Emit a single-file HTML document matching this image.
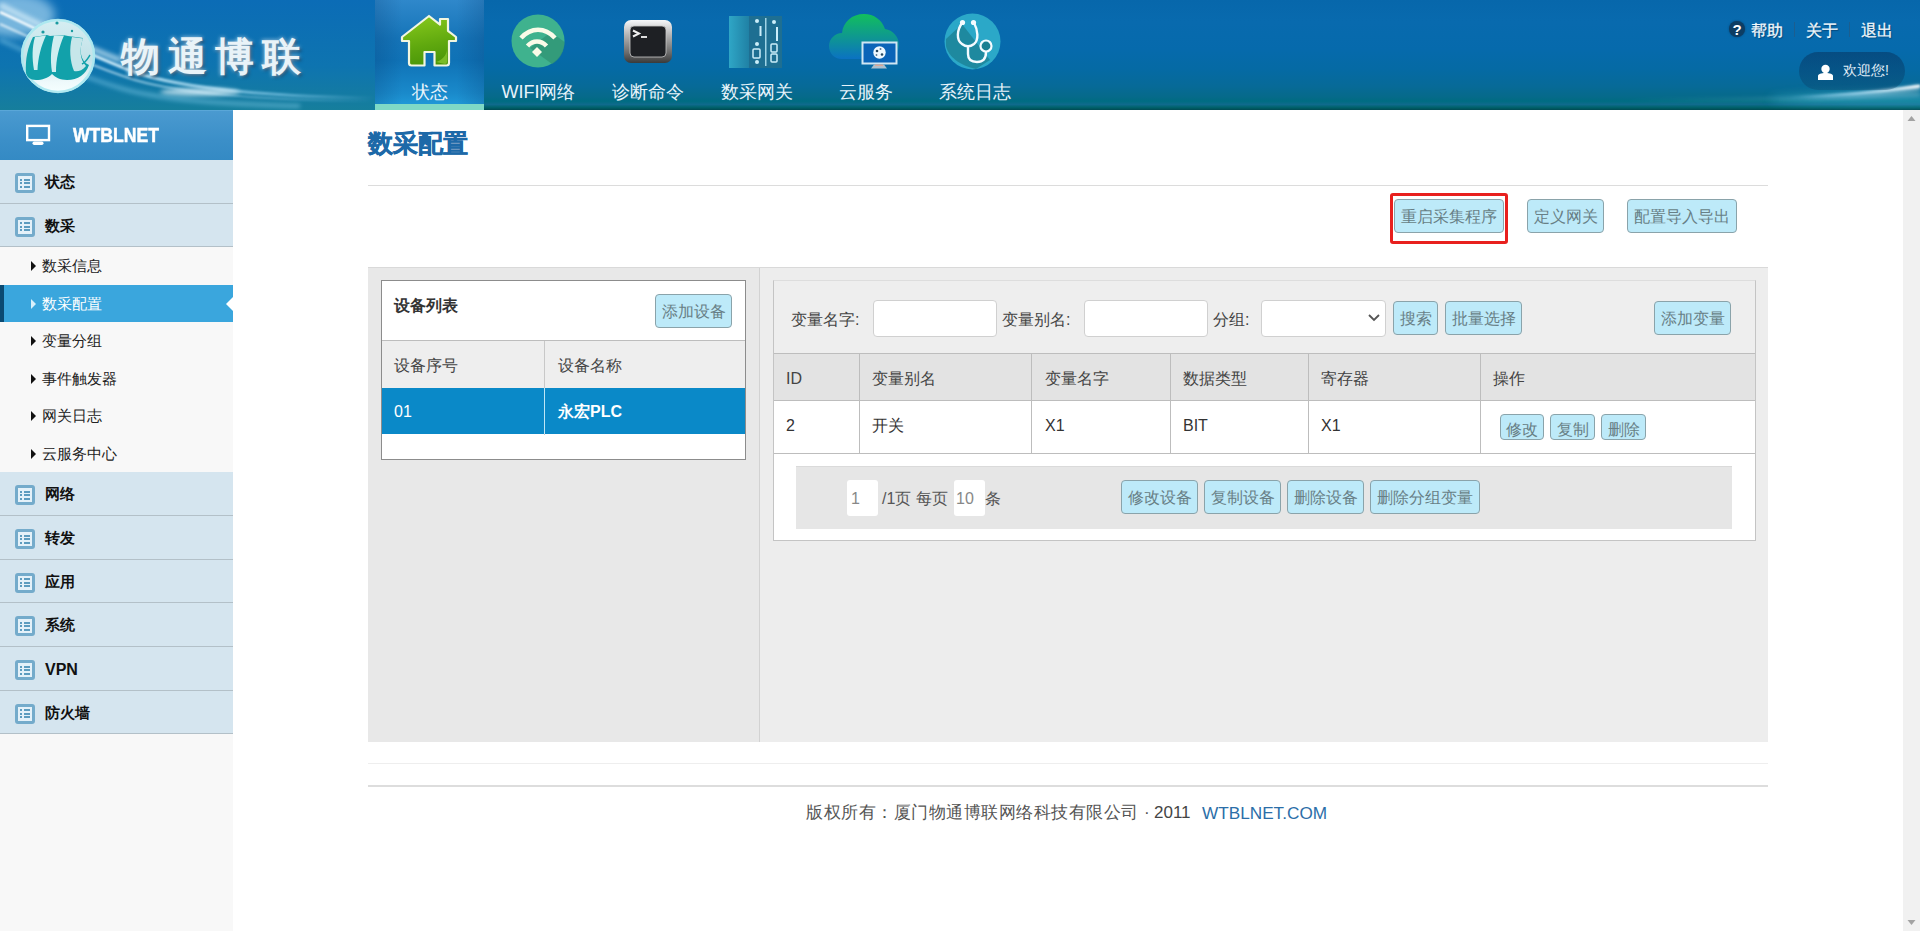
<!DOCTYPE html>
<html><head><meta charset="utf-8">
<style>
*{box-sizing:border-box;margin:0;padding:0}
html,body{width:1920px;height:931px;overflow:hidden;background:#fff;font-family:"Liberation Sans",sans-serif;color:#333}
.a{position:absolute}
#hdr{left:0;top:0;width:1920px;height:110px;background:linear-gradient(180deg,#0767ab 0%,#086aae 20%,#066aac 45%,#056aa4 63%,#076a98 78%,#066a8a 88%,#006c82 92%,#0f6a8c 95%,#00626c 97.5%,#004a52 100%);overflow:hidden}
.nav{top:0;width:109px;height:110px;text-align:center;color:#e8f4fb;font-size:18px}
.nav .lb{position:absolute;left:0;right:0;top:80px;line-height:24px}
#sb{left:0;top:110px;width:233px;height:821px;background:#f8f8f8}
.mi{left:0;width:233px;background:#d5e5ef;border-bottom:1px solid #b3c0c8;font-size:14.5px;font-weight:bold;color:#111}
.mi .t{position:absolute;left:45px;top:0}
.ico{position:absolute;left:15px;width:20px;height:20px;border:3px solid #74abcb;border-radius:3px;background:#e4f1f9}
.ico i{position:absolute;left:2px;width:2px;height:2px;background:#5d9cbf;box-shadow:4px 0 0 #5d9cbf,6px 0 0 #5d9cbf,8px 0 0 #5d9cbf}
.si{left:0;width:233px;height:37.5px;font-size:15px;color:#222;line-height:37.5px}
.si .t{position:absolute;left:42px}
.si .tri{position:absolute;left:31px;top:14px;width:0;height:0;border-left:5px solid #111;border-top:5px solid transparent;border-bottom:5px solid transparent}
.btn{position:absolute;height:34px;background:#bdeaf9;border:1px solid #8aa3aa;border-radius:4px;color:#687f86;font-size:16px;text-align:center;line-height:34px;white-space:nowrap}
.th{background:#eeeeee}
</style></head><body>
<div id="hdr" class="a">
 <!-- streaks left -->
 <svg class="a" style="left:0;top:0" width="1920" height="110">
  <defs>
   <filter id="bl2" filterUnits="userSpaceOnUse" x="-100" y="-100" width="2200" height="320"><feGaussianBlur stdDeviation="2"/></filter>
   <filter id="bl1" filterUnits="userSpaceOnUse" x="-100" y="-100" width="2200" height="320"><feGaussianBlur stdDeviation="0.8"/></filter>
   <filter id="bl4" filterUnits="userSpaceOnUse" x="-100" y="-100" width="2200" height="320"><feGaussianBlur stdDeviation="5"/></filter>
   <linearGradient id="lbg" x1="0" y1="0" x2="0" y2="1"><stop offset="0" stop-color="#0b6cb6"/><stop offset="0.6" stop-color="#0e74b0"/><stop offset="1" stop-color="#167e9c"/></linearGradient>
   <linearGradient id="sA" x1="0" x2="1"><stop offset="0" stop-color="#fff" stop-opacity="1"/><stop offset="0.35" stop-color="#d8f4ff" stop-opacity="0.85"/><stop offset="0.75" stop-color="#a6e2ff" stop-opacity="0.5"/><stop offset="1" stop-color="#a6e2ff" stop-opacity="0"/></linearGradient>
   <linearGradient id="sR" x1="1" x2="0"><stop offset="0" stop-color="#fff" stop-opacity="1"/><stop offset="0.5" stop-color="#bfeaff" stop-opacity="0.6"/><stop offset="1" stop-color="#9fe0ff" stop-opacity="0"/></linearGradient>
   <linearGradient id="sph" x1="0" y1="0" x2="0" y2="1"><stop offset="0" stop-color="#d6eef2"/><stop offset="0.55" stop-color="#c2e2e8"/><stop offset="0.85" stop-color="#eef9fb"/><stop offset="1" stop-color="#f6ffff"/></linearGradient>
  </defs>
  <rect x="0" y="0" width="375" height="110" fill="url(#lbg)"/>
  <ellipse cx="15" cy="15" rx="40" ry="22" fill="#cdefff" opacity="0.55" filter="url(#bl4)"/>
  <path d="M0,12 C50,35 95,58 140,74 C200,92 290,97 375,98" fill="none" stroke="url(#sA)" stroke-width="3" filter="url(#bl1)"/>
  <path d="M0,24 C45,44 90,66 135,80 C190,96 280,100 375,101" fill="none" stroke="url(#sA)" stroke-width="2" filter="url(#bl1)" opacity="0.7"/>
  <path d="M0,5 C40,25 80,45 120,60" fill="none" stroke="#e6f8ff" stroke-width="6" filter="url(#bl2)" opacity="0.6"/>
  <path d="M0,40 C40,58 80,76 120,88 C160,100 220,104 300,106" fill="none" stroke="#8fd6f2" stroke-width="4" filter="url(#bl2)" opacity="0.45"/>
  <ellipse cx="200" cy="92" rx="40" ry="4" fill="#e8f8ff" opacity="0.7" filter="url(#bl2)"/>
  <ellipse cx="1880" cy="99" rx="110" ry="6" fill="#3fb6d8" opacity="0.5" filter="url(#bl4)"/>
  <path d="M1790,97 C1840,96 1880,92 1920,86" fill="none" stroke="url(#sR)" stroke-width="2.5" filter="url(#bl1)"/>
  <path d="M1800,97 C1850,96 1890,92 1920,87" fill="none" stroke="url(#sR)" stroke-width="3.5" filter="url(#bl2)" opacity="0.8"/>
  <path d="M1620,101 C1760,100 1860,98 1920,94" fill="none" stroke="url(#sR)" stroke-width="2" filter="url(#bl2)" opacity="0.45"/>
  
  <circle cx="58" cy="56" r="37" fill="url(#sph)"/>
  <circle cx="58" cy="56" r="36" fill="none" stroke="#a8e8f0" stroke-width="2.5" opacity="0.9"/>
  <path d="M26,73 C25,59 28,47 33,37 L47,35 L50,36 L63,35 L68,36 L83,38 C79,50 80,61 89,65 C86,74 78,80 67,80 C60,80 55,77 52,74 C48,78 42,80 36,80 C30,80 27,77 26,73 Z" fill="#12a1aa"/>
  <path d="M35,37 L46,35.5 C41,46 38,58 37.5,70 L34,70 C32,58 32,47 35,37 Z" fill="#d0eef0"/>
  <path d="M54,35.5 L64,35.5 C59,47 56,59 56,72 L52,72 C50,59 51,47 54,35.5 Z" fill="#d0eef0"/>
  <path d="M72,37 L83,38.5 C79,50 80,60 86,66 C82,71 77,72 74,71 C70,61 69,49 72,37 Z" fill="#c6e6ea"/>
  <path d="M82,64 C86,62 88,58 90,55" fill="none" stroke="#12a1aa" stroke-width="1.5"/>
  <circle cx="57" cy="23" r="1.6" fill="#1a9aa0"/><circle cx="43" cy="32" r="1.6" fill="#1a9aa0"/><circle cx="72" cy="31" r="1.2" fill="#1a9aa0"/>
  
  <rect x="375" y="0" width="1" height="110" fill="#3d8fcc" opacity="0.6"/>
 </svg>
 <div class="a" style="left:121px;top:32px;font-size:39px;font-weight:bold;color:#e9f3f8;letter-spacing:8px;line-height:50px;text-shadow:0 0 4px rgba(255,255,255,0.7),2px 2px 3px rgba(0,30,60,0.6)">物通博联</div>
 <!-- active tab -->
 <div class="a" style="left:375px;top:0;width:109px;height:110px;background:linear-gradient(180deg,#2f88cb 0%,#1574b8 35%,#0f72b6 55%,#1a8acb 85%,#22a0de 100%)"></div><div class="a" style="left:375px;top:0;width:109px;height:104px;background:linear-gradient(90deg,rgba(0,40,90,0.18),rgba(0,0,0,0) 25%,rgba(0,0,0,0) 75%,rgba(0,40,90,0.18))"></div>
 <div class="a" style="left:375px;top:104px;width:109px;height:6px;background:#7fd9c6"></div>
 <div class="a nav" style="left:375px"><div class="lb">状态</div></div>
 <div class="a nav" style="left:484px"><div class="lb">WIFI网络</div></div>
 <div class="a nav" style="left:593px"><div class="lb">诊断命令</div></div>
 <div class="a nav" style="left:702px"><div class="lb">数采网关</div></div>
 <div class="a nav" style="left:811px"><div class="lb">云服务</div></div>
 <div class="a nav" style="left:920px"><div class="lb">系统日志</div></div>
 <svg class="a" style="left:0;top:0" width="1100" height="110">
  <defs>
   <linearGradient id="hg" x1="0.3" y1="0" x2="0.5" y2="1"><stop offset="0" stop-color="#86c81c"/><stop offset="0.6" stop-color="#5fa80e"/><stop offset="1" stop-color="#4a9608"/></linearGradient>
   <linearGradient id="tg" x1="0" y1="0" x2="0" y2="1"><stop offset="0" stop-color="#f6f8fa"/><stop offset="0.35" stop-color="#b4b4b4"/><stop offset="0.75" stop-color="#6e6e6e"/><stop offset="1" stop-color="#3a3a3a"/></linearGradient>
   <linearGradient id="cg" x1="0" y1="0" x2="0" y2="1"><stop offset="0" stop-color="#12bf5c"/><stop offset="1" stop-color="#0b72c2"/></linearGradient>
   <linearGradient id="gw" x1="0" y1="0" x2="1" y2="0"><stop offset="0" stop-color="#2fa6c6"/><stop offset="1" stop-color="#1f7fa3"/></linearGradient>
  </defs>
  <!-- house -->
  <path d="M429,16 L440,24.6 L440,19 L448,19 L448,30.8 L456,37 L456,41 L449,41 L449,63 Q449,65.5 446.5,65.5 L434.5,65.5 L434.5,52 L424.5,52 L424.5,65.5 L411.5,65.5 Q409,65.5 409,63 L409,41 L402,41 L402,37 Z" fill="url(#hg)" stroke="#f2f6e0" stroke-width="2.2" stroke-linejoin="round"/>
  <path d="M436,62 C442,60 446,56 447,50 L447,62 Q447,64 445,64 Z" fill="#9ad43a" opacity="0.6"/>
  <!-- wifi -->
  <circle cx="538" cy="41" r="26.5" fill="#3fb28e"/>
  <path d="M530,48 L552,64 C560,60 565,50 564.5,42 L551,32 Z" fill="#2f9272" opacity="0.7"/>
  <path d="M521,38 C531,27 545,27 555,38" fill="none" stroke="#fafbe8" stroke-width="4.5"/>
  <path d="M527.5,46 C533,40 541,40 546.5,46" fill="none" stroke="#fafbe8" stroke-width="4.5"/>
  <path d="M537,47 L542,52 L537,57 L532,52 Z" fill="#fafbe8"/>
  <!-- terminal -->
  <rect x="624" y="20" width="48" height="43" rx="7" fill="url(#tg)"/>
  <rect x="630" y="26" width="36" height="31" rx="4" fill="#1e2024" stroke="#c8c8c8" stroke-width="0.8"/>
  <path d="M633,30.5 L639,33.5 L633,36.5" fill="none" stroke="#eee" stroke-width="2"/>
  <rect x="641" y="36" width="6" height="2" fill="#ddd"/>
  <!-- gateway -->
  <rect x="729" y="16" width="21" height="52" fill="url(#gw)"/>
  <rect x="749" y="16" width="33" height="52" fill="#1e6f92"/>
  <rect x="765" y="18" width="1.5" height="48" fill="#9fd4e6"/>
  <circle cx="757" cy="21" r="2" fill="#cbeefa"/><rect x="759.5" y="26" width="2" height="10" fill="#cbeefa"/>
  <circle cx="757" cy="44" r="2" fill="#cbeefa"/><rect x="753" y="49" width="7" height="9" rx="1" fill="none" stroke="#cbeefa" stroke-width="1.5"/><circle cx="757" cy="62" r="2" fill="#cbeefa"/>
  <circle cx="774" cy="22" r="2" fill="#cbeefa"/><rect x="776" y="27" width="2" height="14" fill="#cbeefa"/>
  <rect x="771" y="44" width="6" height="8" rx="1" fill="none" stroke="#cbeefa" stroke-width="1.5"/><rect x="771" y="54" width="6" height="8" rx="1" fill="none" stroke="#cbeefa" stroke-width="1.5"/>
  <!-- cloud -->
  <path d="M842,59 C834,59 829,53 829,46 C829,39 835,33 842,33 C843,22 852,14 864,14 C874,14 882,20 885,29 C893,30 899,37 899,45 C899,53 893,59 885,59 Z" fill="url(#cg)"/>
  <rect x="862.5" y="42.5" width="34" height="21" fill="#0a64b8" stroke="#cfe6f3" stroke-width="2"/>
  <path d="M874,64.5 L884,64.5 L887,68.5 L871,68.5 Z" fill="#aebfcc"/><rect x="875" y="64.5" width="8" height="1.5" fill="#d9a89a"/>
  <circle cx="879.5" cy="52.5" r="6.2" fill="#eef8ff"/>
  <circle cx="877" cy="51" r="1.3" fill="#27465e"/><circle cx="882" cy="54.5" r="1.3" fill="#27465e"/><circle cx="880.5" cy="49" r="1" fill="#5a7890"/><circle cx="876.5" cy="55" r="0.9" fill="#5a7890"/>
  <!-- stethoscope -->
  <circle cx="972.5" cy="41.5" r="28" fill="#2ba8c8"/>
  <path d="M946,39 L962,24 L990,60 L976,69 C960,66 948,56 946,46 Z" fill="#1b7f92" opacity="0.75"/>
  <path d="M962,23 C957,30 956,40 962,44 C966,47 970,47 974,44 C979,40 978,30 974,23" fill="none" stroke="#f4fbff" stroke-width="2.4"/>
  <circle cx="962.5" cy="22.5" r="2.6" fill="#f4fbff"/><circle cx="973.5" cy="22.5" r="2.6" fill="#f4fbff"/>
  <path d="M968,46 L968,54 C968,60 972,62 977,62 C983,62 986,58 986,52" fill="none" stroke="#f4fbff" stroke-width="2.4"/>
  <circle cx="986" cy="46" r="5.5" fill="#1b7f92" stroke="#f4fbff" stroke-width="2.2"/>
 </svg>
 <!-- right links -->
 <div class="a" style="left:1729px;top:21px;width:16px;height:16px;border-radius:50%;background:#0d3d63;color:#fff;font-size:15px;font-weight:bold;text-align:center;line-height:17px;box-shadow:0 0 2px rgba(0,30,60,0.5)">?</div>
 <div class="a" style="left:1751px;top:20px;font-size:16px;color:#f2f8fc;line-height:22px;-webkit-text-stroke:0.3px #f2f8fc;text-shadow:1px 1px 1px rgba(0,30,60,0.5)">帮助</div>
 <div class="a" style="left:1794px;top:22px;width:1px;height:15px;background:#1c5e8f"></div>
 <div class="a" style="left:1806px;top:20px;font-size:16px;color:#f2f8fc;line-height:22px;-webkit-text-stroke:0.3px #f2f8fc;text-shadow:1px 1px 1px rgba(0,30,60,0.5)">关于</div>
 <div class="a" style="left:1849px;top:22px;width:1px;height:15px;background:#1c5e8f"></div>
 <div class="a" style="left:1861px;top:20px;font-size:16px;color:#f2f8fc;line-height:22px;-webkit-text-stroke:0.3px #f2f8fc;text-shadow:1px 1px 1px rgba(0,30,60,0.5)">退出</div>
 <div class="a" style="left:1799px;top:52px;width:106px;height:38px;border-radius:19px;background:linear-gradient(180deg,rgba(6,40,80,0.45),rgba(10,60,100,0.3))"></div>
 <svg class="a" style="left:1817px;top:64px" width="17" height="17"><circle cx="8.5" cy="5" r="4.2" fill="#fff"/><path d="M1,16 L1,12 C1,10 4,9 8.5,9 C13,9 16,10 16,12 L16,16 Z" fill="#fff"/></svg>
 <div class="a" style="left:1843px;top:60px;font-size:14px;color:#e0eef8;line-height:20px">欢迎您!</div>
</div>
<div id="sb" class="a"></div>
<div class="a" style="left:0;top:110px;width:233px;height:50px">
<div class="a" style="left:0;top:0;width:233px;height:50px;background:linear-gradient(180deg,#4a9ad0 0%,#3b8fc8 60%,#348ac4 100%);border-top:1px solid #5aa7d8"></div>
<svg class="a" style="left:25px;top:14px" width="27" height="23"><rect x="2.2" y="1.9" width="21.8" height="14.2" fill="none" stroke="#fff" stroke-width="2.4"/><rect x="7.5" y="17.6" width="11" height="3.4" rx="1.7" fill="#fff"/></svg>
<div class="a" style="left:73px;top:13px;font-size:20px;font-weight:bold;color:#fff;line-height:24px;transform:scaleX(0.88);transform-origin:0 0;-webkit-text-stroke:0.5px #fff">WTBLNET</div>
</div>
<div class="a mi" style="top:160px;height:43.67px"><div class="ico" style="top:13px"><i style="top:2.5px"></i><i style="top:6px"></i><i style="top:9.5px"></i></div><div class="t" style="line-height:44px">状态</div></div>
<div class="a mi" style="top:203.67px;height:43.67px"><div class="ico" style="top:13px"><i style="top:2.5px"></i><i style="top:6px"></i><i style="top:9.5px"></i></div><div class="t" style="line-height:44px">数采</div></div>
<div class="a mi" style="top:472.33px;height:43.67px"><div class="ico" style="top:13px"><i style="top:2.5px"></i><i style="top:6px"></i><i style="top:9.5px"></i></div><div class="t" style="line-height:44px">网络</div></div>
<div class="a mi" style="top:516px;height:43.67px"><div class="ico" style="top:13px"><i style="top:2.5px"></i><i style="top:6px"></i><i style="top:9.5px"></i></div><div class="t" style="line-height:44px">转发</div></div>
<div class="a mi" style="top:559.67px;height:43.67px"><div class="ico" style="top:13px"><i style="top:2.5px"></i><i style="top:6px"></i><i style="top:9.5px"></i></div><div class="t" style="line-height:44px">应用</div></div>
<div class="a mi" style="top:603.33px;height:43.67px"><div class="ico" style="top:13px"><i style="top:2.5px"></i><i style="top:6px"></i><i style="top:9.5px"></i></div><div class="t" style="line-height:44px">系统</div></div>
<div class="a mi" style="top:647px;height:43.67px"><div class="ico" style="top:13px"><i style="top:2.5px"></i><i style="top:6px"></i><i style="top:9.5px"></i></div><div class="t" style="line-height:45px;font-size:16px">VPN</div></div>
<div class="a mi" style="top:690.67px;height:43.67px"><div class="ico" style="top:13px"><i style="top:2.5px"></i><i style="top:6px"></i><i style="top:9.5px"></i></div><div class="t" style="line-height:44px">防火墙</div></div>
<div class="a si" style="top:247.33px"><div class="tri"></div><div class="t">数采信息</div></div>
<div class="a si" style="top:284.83000000000004px;background:#3aa6dd;color:#fff"><div class="a" style="left:0;top:0;width:4px;height:37.5px;background:#0b4a72"></div><div class="tri" style="border-left-color:#d8f0fb"></div><div class="t">数采配置</div></div>
<div class="a" style="left:226px;top:296.58000000000004px;width:0;height:0;border-right:7px solid #fff;border-top:7px solid transparent;border-bottom:7px solid transparent"></div>
<div class="a si" style="top:322.33000000000004px"><div class="tri"></div><div class="t">变量分组</div></div>
<div class="a si" style="top:359.83000000000004px"><div class="tri"></div><div class="t">事件触发器</div></div>
<div class="a si" style="top:397.33000000000004px"><div class="tri"></div><div class="t">网关日志</div></div>
<div class="a si" style="top:434.83000000000004px"><div class="tri"></div><div class="t">云服务中心</div></div>
<div class="a" style="left:368px;top:125px;font-size:25px;font-weight:bold;color:#1d69a8;line-height:36px;-webkit-text-stroke:0.5px #1d69a8">数采配置</div>
<div class="a" style="left:368px;top:185px;width:1400px;height:1px;background:#dcdcdc"></div>
<div class="btn" style="left:1394px;top:199px;width:110px">重启采集程序</div>
<div class="btn" style="left:1527px;top:199px;width:77px">定义网关</div>
<div class="btn" style="left:1627px;top:199px;width:110px">配置导入导出</div>
<div class="a" style="left:1390px;top:193px;width:118px;height:51px;border:3px solid #e8201e;border-radius:3px"></div>
<div class="a" style="left:368px;top:267px;width:1400px;height:475px;background:#ededed;border-top:1px solid #d9d9d9"></div>
<div class="a" style="left:368px;top:268px;width:391px;height:474px;background:#e8e8e8"></div>
<div class="a" style="left:759px;top:268px;width:1px;height:474px;background:#d2d2d2"></div>
<div class="a" style="left:381px;top:280px;width:365px;height:180px;background:#fff;border:1px solid #8c8c8c">
 <div class="a" style="left:12px;top:14px;font-size:16px;font-weight:bold;color:#333;line-height:22px">设备列表</div>
 <div class="btn" style="left:273px;top:13px;width:77px;height:34px">添加设备</div>
 <div class="a" style="left:0;top:59px;width:363px;height:1px;background:#bdbdbd"></div>
 <div class="a" style="left:0;top:60px;width:363px;height:47px;background:#eeeeee"></div>
 <div class="a" style="left:162px;top:60px;width:1px;height:94px;background:#c8c8c8"></div>
 <div class="a" style="left:12px;top:74px;font-size:16px;color:#444;line-height:22px">设备序号</div>
 <div class="a" style="left:176px;top:74px;font-size:16px;color:#444;line-height:22px">设备名称</div>
 <div class="a" style="left:0;top:107px;width:363px;height:46px;background:#0a89c8"></div>
 <div class="a" style="left:162px;top:107px;width:1px;height:46px;background:#bfe6f6"></div>
 <div class="a" style="left:12px;top:120px;font-size:16px;color:#fff;line-height:22px">01</div>
 <div class="a" style="left:176px;top:120px;font-size:16px;font-weight:bold;color:#fff;line-height:22px">永宏PLC</div>
</div>
<div class="a" style="left:773px;top:280px;width:983px;height:261px;background:#fff;border:1px solid #c4c4c4;border-top-color:#dddddd">
 <div class="a" style="left:0;top:0;width:981px;height:72px;background:#eeeeee"></div>
 <div class="a" style="left:17px;top:28px;font-size:16px;color:#444;line-height:22px">变量名字: </div>
 <div class="a" style="left:99px;top:19px;width:124px;height:37px;background:#fff;border:1px solid #d0d0d0;border-radius:4px"></div>
 <div class="a" style="left:228px;top:28px;font-size:16px;color:#444;line-height:22px">变量别名: </div>
 <div class="a" style="left:310px;top:19px;width:124px;height:37px;background:#fff;border:1px solid #d0d0d0;border-radius:4px"></div>
 <div class="a" style="left:439px;top:28px;font-size:16px;color:#444;line-height:22px">分组: </div>
 <div class="a" style="left:487px;top:19px;width:125px;height:37px;background:#fff;border:1px solid #d0d0d0;border-radius:4px"></div>
 <svg class="a" style="left:594px;top:33px" width="12" height="8"><path d="M1,1 L6,6 L11,1" fill="none" stroke="#555" stroke-width="1.8"/></svg>
 <div class="btn" style="left:619px;top:20px;width:45px;height:34px">搜索</div>
 <div class="btn" style="left:671px;top:20px;width:77px;height:34px">批量选择</div>
 <div class="btn" style="left:880px;top:20px;width:77px;height:34px">添加变量</div>
 <div class="a" style="left:0;top:72px;width:981px;height:1px;background:#bdbdbd"></div>
 <div class="a" style="left:0;top:73px;width:981px;height:46px;background:#e3e3e3"></div>
 <div class="a" style="left:0;top:119px;width:981px;height:1px;background:#bdbdbd"></div>
 <div class="a" style="left:0;top:172px;width:981px;height:1px;background:#bdbdbd"></div>
 <div class="a" style="left:85px;top:73px;width:1px;height:99px;background:#bdbdbd"></div><div class="a" style="left:257px;top:73px;width:1px;height:99px;background:#bdbdbd"></div><div class="a" style="left:396px;top:73px;width:1px;height:99px;background:#bdbdbd"></div><div class="a" style="left:534px;top:73px;width:1px;height:99px;background:#bdbdbd"></div><div class="a" style="left:706px;top:73px;width:1px;height:99px;background:#bdbdbd"></div>
 <div class="a" style="left:12px;top:87px;font-size:16px;color:#444;line-height:22px">ID</div><div class="a" style="left:98px;top:87px;font-size:16px;color:#444;line-height:22px">变量别名</div><div class="a" style="left:271px;top:87px;font-size:16px;color:#444;line-height:22px">变量名字</div><div class="a" style="left:409px;top:87px;font-size:16px;color:#444;line-height:22px">数据类型</div><div class="a" style="left:547px;top:87px;font-size:16px;color:#444;line-height:22px">寄存器</div><div class="a" style="left:719px;top:87px;font-size:16px;color:#444;line-height:22px">操作</div>
 <div class="a" style="left:12px;top:134px;font-size:16px;color:#333;line-height:22px">2</div><div class="a" style="left:98px;top:134px;font-size:16px;color:#333;line-height:22px">开关</div><div class="a" style="left:271px;top:134px;font-size:16px;color:#333;line-height:22px">X1</div><div class="a" style="left:409px;top:134px;font-size:16px;color:#333;line-height:22px">BIT</div><div class="a" style="left:547px;top:134px;font-size:16px;color:#333;line-height:22px">X1</div>
 <div class="btn" style="left:726px;top:133px;width:44px;height:26px;line-height:30px;font-size:16px;overflow:hidden">修改</div>
 <div class="btn" style="left:776px;top:133px;width:45px;height:26px;line-height:30px;font-size:16px;overflow:hidden">复制</div>
 <div class="btn" style="left:827px;top:133px;width:45px;height:26px;line-height:30px;font-size:16px;overflow:hidden">删除</div>
 <div class="a" style="left:22px;top:185px;width:936px;height:63px;background:#e6e6e6;border-top:1px solid #dadada"></div>
 <div class="a" style="left:73px;top:199px;width:31px;height:36px;background:#fff;border-radius:3px;font-size:16px;color:#888;line-height:37px;padding-left:4px">1</div>
 <div class="a" style="left:108px;top:207px;font-size:16px;color:#555;line-height:22px">/1页 每页</div>
 <div class="a" style="left:180px;top:199px;width:31px;height:36px;background:#fff;border-radius:3px;font-size:16px;color:#888;line-height:37px;padding-left:2px">10</div>
 <div class="a" style="left:211px;top:207px;font-size:16px;color:#555;line-height:22px">条</div>
 <div class="btn" style="left:347px;top:199px;width:77px;height:34px">修改设备</div>
 <div class="btn" style="left:430px;top:199px;width:77px;height:34px">复制设备</div>
 <div class="btn" style="left:513px;top:199px;width:77px;height:34px">删除设备</div>
 <div class="btn" style="left:596px;top:199px;width:110px;height:34px">删除分组变量</div>
</div>
<div class="a" style="left:368px;top:763px;width:1400px;height:1px;background:#eeeeee"></div>
<div class="a" style="left:368px;top:785px;width:1400px;height:2px;background:#dddddd"></div>
<div class="a" style="left:806px;top:801px;font-size:17px;letter-spacing:0.5px;color:#555;line-height:24px;white-space:nowrap">版权所有：厦门物通博联网络科技有限公司</div>
<div class="a" style="left:1144px;top:801px;font-size:17px;color:#555;line-height:24px">·</div>
<div class="a" style="left:1154px;top:801px;font-size:17px;color:#444;line-height:24px">2011</div>
<div class="a" style="left:1202px;top:801px;font-size:17.2px;color:#2b6ea8;line-height:24px;white-space:nowrap">WTBLNET.COM</div>
<div class="a" style="left:1903px;top:110px;width:17px;height:821px;background:#f1f1f1"></div>
<svg class="a" style="left:1903px;top:110px" width="17" height="17"><path d="M4.5,11 L8.5,6 L12.5,11 Z" fill="#a3a3a3"/></svg>
<svg class="a" style="left:1903px;top:914px" width="17" height="17"><path d="M4.5,6 L8.5,11 L12.5,6 Z" fill="#a3a3a3"/></svg>
</body></html>
